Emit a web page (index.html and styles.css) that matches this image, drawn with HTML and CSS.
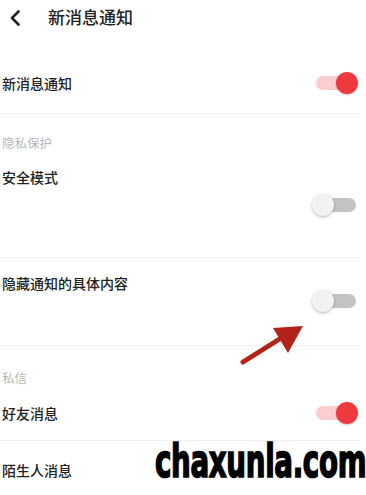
FILE: index.html
```html
<!DOCTYPE html>
<html lang="zh">
<head>
<meta charset="utf-8">
<link rel="stylesheet" href="styles.css">
</head>
<body>
<div class="page">
  <header class="header">
    <svg class="back" width="14" height="18" viewBox="0 0 14 18"><path d="M10.5 2.5 L4 9 L10.5 15.5" fill="none" stroke="#222" stroke-width="2.6" stroke-linecap="round" stroke-linejoin="round"/></svg>
    <span class="title">新消息通知</span>
  </header>

  <div class="row row-first">
    <span class="text">新消息通知</span>
    <span class="toggle on"><span class="track"></span><span class="knob"></span></span>
  </div>

  <div class="label label-privacy">隐私保护</div>

  <div class="row-tall row-safe">
    <span class="text">安全模式</span>
    <div class="toggle-line"><span class="toggle off"><span class="track"></span><span class="knob"></span></span></div>
  </div>

  <div class="row-tall row-hide">
    <span class="text">隐藏通知的具体内容</span>
    <div class="toggle-line"><span class="toggle off"><span class="track"></span><span class="knob"></span></span></div>
  </div>

  <div class="label label-msg">私信</div>

  <div class="row row-friend">
    <span class="text">好友消息</span>
    <span class="toggle on"><span class="track"></span><span class="knob"></span></span>
  </div>

  <div class="row-last">
    <span class="text">陌生人消息</span>
  </div>

  <svg class="arrow" width="366" height="495" viewBox="0 0 366 495">
    <line x1="243" y1="362" x2="286" y2="335" stroke="#b3231a" stroke-width="5" stroke-linecap="round"/>
    <polygon points="303,326 273,328 288,353" fill="#b3231a"/>
  </svg>

  <div class="watermark">chaxunla.com</div>
</div>
</body>
</html>
```

FILE: styles.css
```css
html, body {
  margin: 0;
  padding: 0;
  background: #ffffff;
}
.page {
  position: relative;
  width: 366px;
  height: 495px;
  overflow: hidden;
  font-family: "Noto Sans CJK SC", "Noto Sans", sans-serif;
  color: #222222;
}
.header {
  height: 34px;
  display: flex;
  align-items: center;
}
.back {
  margin-left: 8px;
  margin-top: 1px;
}
.title {
  margin-left: 26px;
  font-size: 17px;
  line-height: 20px;
  font-weight: 500;
  color: #222;
}
.text {
  font-size: 14px;
  line-height: 20px;
  font-weight: 500;
  color: #222;
}
.row {
  display: flex;
  align-items: center;
  justify-content: space-between;
  box-sizing: border-box;
  padding-left: 2px;
  padding-right: 2px;
  margin-right: 6px;
  border-bottom: 1px solid #efefef;
}
.row-first {
  margin-top: 22px;
  height: 58px;
  padding-bottom: 4px;
}
.row-friend {
  height: 53px;
  padding-bottom: 2px;
}
.label {
  padding-left: 2px;
  font-size: 12.5px;
  line-height: 20px;
  color: #b8b8b8;
}
.label-privacy {
  margin-top: 19px;
}
.label-msg {
  margin-top: 22px;
}
.row-tall {
  display: flex;
  flex-direction: column;
  padding-left: 2px;
  margin-right: 6px;
  border-bottom: 1px solid #efefef;
}
.row-tall .toggle-line {
  display: flex;
  justify-content: flex-end;
  padding-right: 2px;
}
.row-safe {
  padding-top: 14px;
  padding-bottom: 40px;
}
.row-safe .toggle-line {
  margin-top: 6px;
}
.row-hide {
  padding-top: 15px;
  padding-bottom: 32px;
}
.row-hide .toggle-line {
  margin-top: -4px;
}
.row-last {
  padding-left: 2px;
  padding-top: 16px;
}
.toggle {
  position: relative;
  display: block;
  width: 46px;
  height: 24px;
}
.toggle .track {
  position: absolute;
  left: 4px;
  top: 5px;
  width: 38px;
  height: 14px;
  border-radius: 7px;
}
.toggle .knob {
  position: absolute;
  top: 1px;
  width: 22px;
  height: 22px;
  border-radius: 50%;
}
.toggle.on .track {
  background: #fbcdd0;
}
.toggle.on .knob {
  right: 0;
  background: #ee3a3f;
  box-shadow: 0 1px 2px rgba(120, 0, 0, 0.25);
}
.toggle.off .track {
  background: #c3c3c3;
  left: 6px;
  width: 38px;
}
.toggle.off .knob {
  left: 0;
  background: #f2f2f2;
  box-shadow: 0 1px 3px rgba(0, 0, 0, 0.28);
}
.arrow {
  position: absolute;
  left: 0;
  top: 0;
  pointer-events: none;
}
.watermark {
  position: absolute;
  left: 155px;
  top: 435px;
  font-family: "DejaVu Sans Condensed", "DejaVu Sans", sans-serif;
  font-weight: bold;
  font-size: 47px;
  line-height: 52px;
  letter-spacing: -0.5px;
  color: #000;
  -webkit-text-stroke: 1.6px #000;
  transform-origin: left top;
  transform: scaleX(0.655);
  white-space: nowrap;
}
```
